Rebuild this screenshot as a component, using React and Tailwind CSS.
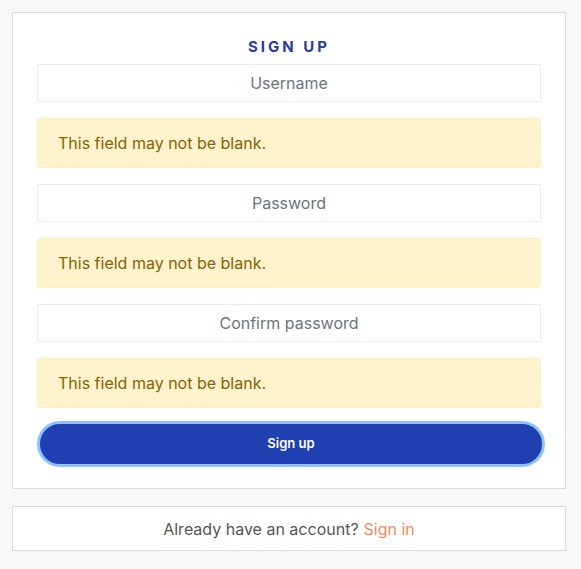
import React from 'react';

const font = { fontFamily: 'Inter, "Noto Sans", sans-serif' };

const Field = ({ placeholder }) => (
  <input
    type="text"
    placeholder={placeholder}
    className="block w-full h-[38px] border border-[#ececec] bg-white text-center text-base text-[#495057] placeholder:text-[#6c757d] outline-none"
  />
);

const Warning = ({ children }) => (
  <div className="mt-4 h-[50px] flex items-center px-5 rounded-[3px] border border-[#ffeeba] bg-[#fff3cd] text-[#856404] text-base">
    {children}
  </div>
);

export default function App() {
  return (
    <div className="min-h-[569px] bg-[#f8f8f8] pt-3 pl-3" style={font}>
      <div className="w-[554px] bg-white border border-[#dcdcdc] px-6 pt-6 pb-[21px]">
        <h1 className="text-center text-[15px] leading-5 font-bold tracking-[0.2em] text-[#2a3aa0] mb-[7px]">SIGN UP</h1>
        <div className="flex flex-col gap-4">
          <div>
            <Field placeholder="Username" />
            <Warning>This field may not be blank.</Warning>
          </div>
          <div>
            <Field placeholder="Password" />
            <Warning>This field may not be blank.</Warning>
          </div>
          <div>
            <Field placeholder="Confirm password" />
            <Warning>This field may not be blank.</Warning>
          </div>
        </div>
        <button className="mt-[13px] block w-[508px] h-[46px] rounded-full border-[3px] border-[#8dc2fb] bg-[#1f40b0] text-white text-[13px] font-semibold">
          Sign up
        </button>
      </div>
      <div className="mt-[17px] w-[554px] h-[45px] bg-white border border-[#dcdcdc] flex items-center justify-center text-base text-[#555]">
        <span>Already have an account?</span>
        <a className="ml-[5px] text-[#f28b5e]" href="#">Sign in</a>
      </div>
    </div>
  );
}
